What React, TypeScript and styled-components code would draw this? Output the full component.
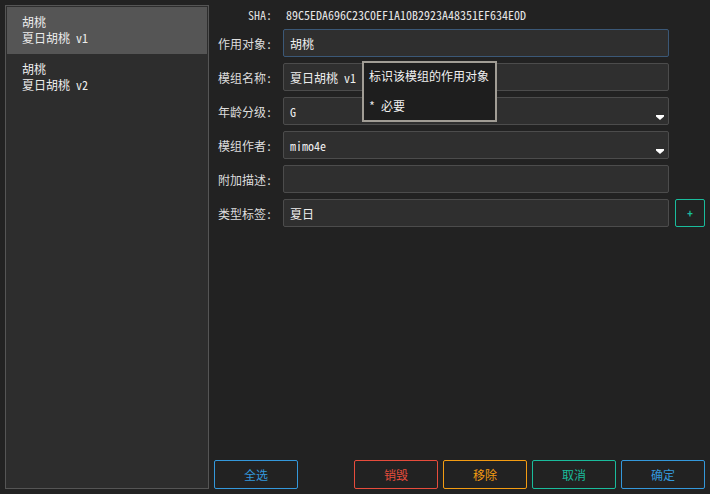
import React from 'react'
import styled, { createGlobalStyle } from 'styled-components'

const FONT = `"Noto Sans Mono CJK SC", "DejaVu Sans Mono", "Noto Sans CJK SC", monospace`

const GlobalStyle = createGlobalStyle`
  html, body {
    margin: 0;
    padding: 0;
    background: #222222;
    font-family: ${FONT};
    font-size: 12px;
    color: #e6e6e6;
  }
  * { box-sizing: border-box; }
`

type Mod = { target: string; name: string }

const mods: Mod[] = [
  { target: '胡桃', name: '夏日胡桃 v1' },
  { target: '胡桃', name: '夏日胡桃 v2' },
]

type Field = { label: string; value: string; select?: boolean; focused?: boolean; tag?: boolean }

const fields: Field[] = [
  { label: '作用对象:', value: '胡桃', focused: true },
  { label: '模组名称:', value: '夏日胡桃 v1' },
  { label: '年龄分级:', value: 'G', select: true },
  { label: '模组作者:', value: 'mimo4e', select: true },
  { label: '附加描述:', value: '' },
  { label: '类型标签:', value: '夏日', tag: true },
]

const Arrow = () => (
  <S.Arrow width="8" height="5" viewBox="0 0 8 5">
    <path d="M0 0H8V1.5L4 5L0 1.5Z" fill="#ffffff" />
  </S.Arrow>
)

const App = () => {
  return (
    <S.Window>
      <GlobalStyle />
      <S.List>
        {mods.map((m, i) => (
          <S.Item key={i} selected={i === 0}>
            <div>{m.target}</div>
            <div>{m.name}</div>
          </S.Item>
        ))}
      </S.List>
      <S.Main>
        <S.Form>
          <S.ShaRow>
            <S.Label>SHA:</S.Label>
            <S.Sha>89C5EDA696C23C0EF1A10B2923A48351EF634E0D</S.Sha>
          </S.ShaRow>
          {fields.map((f) => (
            <S.Row key={f.label}>
              <S.Label>{f.label}</S.Label>
              <S.Input focused={f.focused}>
                {f.value}
                {f.select && <Arrow />}
              </S.Input>
              <S.Side>{f.tag && <S.AddBtn>+</S.AddBtn>}</S.Side>
            </S.Row>
          ))}
          <S.Tooltip>
            <div>标识该模组的作用对象</div>
            <div>* 必要</div>
          </S.Tooltip>
        </S.Form>
        <S.Footer>
          <S.Button color="#3498db">全选</S.Button>
          <S.Right>
            <S.Button color="#e74c3c">销毁</S.Button>
            <S.Button color="#f39c12">移除</S.Button>
            <S.Button color="#1abc9c">取消</S.Button>
            <S.Button color="#3498db">确定</S.Button>
          </S.Right>
        </S.Footer>
      </S.Main>
    </S.Window>
  )
}

const S = {
  Window: styled.div`
    width: 710px;
    height: 494px;
    padding: 5px;
    display: flex;
    background: #222222;
  `,
  List: styled.div`
    width: 204px;
    height: 100%;
    border: 1px solid #555555;
    background: #2d2d2d;
    padding: 1px;
    display: flex;
    flex-direction: column;
  `,
  Item: styled.div<{ selected?: boolean }>`
    height: 47px;
    padding: 7px 0 0 15px;
    line-height: 16px;
    color: #ececec;
    background: ${({ selected }) => (selected ? '#555555' : 'transparent')};
  `,
  Main: styled.div`
    flex: 1;
    margin-left: 4px;
    display: flex;
    flex-direction: column;
    justify-content: space-between;
  `,
  Form: styled.div`
    position: relative;
    display: flex;
    flex-direction: column;
    gap: 6px;
  `,
  ShaRow: styled.div`
    height: 18px;
    display: flex;
    align-items: center;
  `,
  Sha: styled.div`
    margin-left: 14px;
    color: #e6e6e6;
  `,
  Row: styled.div`
    height: 28px;
    display: flex;
    align-items: stretch;
  `,
  Label: styled.div`
    width: 59px;
    text-align: right;
    color: #dddddd;
    display: flex;
    align-items: center;
    justify-content: flex-end;
  `,
  Input: styled.div<{ focused?: boolean }>`
    position: relative;
    flex: 1;
    margin-left: 11px;
    border: 1px solid ${({ focused }) => (focused ? '#3b5877' : '#4c4c4c')};
    border-radius: 2px;
    background: #2f2f2f;
    padding-left: 6px;
    display: flex;
    align-items: center;
    color: #eeeeee;
  `,
  Arrow: styled.svg`
    position: absolute;
    right: 4px;
    bottom: 4px;
  `,
  Side: styled.div`
    width: 30px;
    margin-left: 6px;
    display: flex;
  `,
  AddBtn: styled.div`
    flex: 1;
    border: 1px solid #1abc9c;
    border-radius: 2px;
    color: #1abc9c;
    font-size: 11px;
    font-weight: bold;
    display: flex;
    align-items: center;
    justify-content: center;
  `,
  Tooltip: styled.div`
    position: absolute;
    left: 149px;
    top: 56px;
    width: 135px;
    height: 61px;
    border: 2px solid #a19d95;
    background: #1e1e1e;
    padding: 5px 0 0 5px;
    line-height: 16px;
    color: #f0f0f0;
    display: flex;
    flex-direction: column;
    gap: 14px;
  `,
  Footer: styled.div`
    display: flex;
    justify-content: space-between;
    padding-left: 1px;
  `,
  Right: styled.div`
    display: flex;
    gap: 5px;
  `,
  Button: styled.div<{ color: string }>`
    width: 84px;
    height: 29px;
    border: 1px solid ${({ color }) => color};
    border-radius: 2px;
    color: ${({ color }) => color};
    display: flex;
    align-items: center;
    justify-content: center;
  `,
}

export default App
